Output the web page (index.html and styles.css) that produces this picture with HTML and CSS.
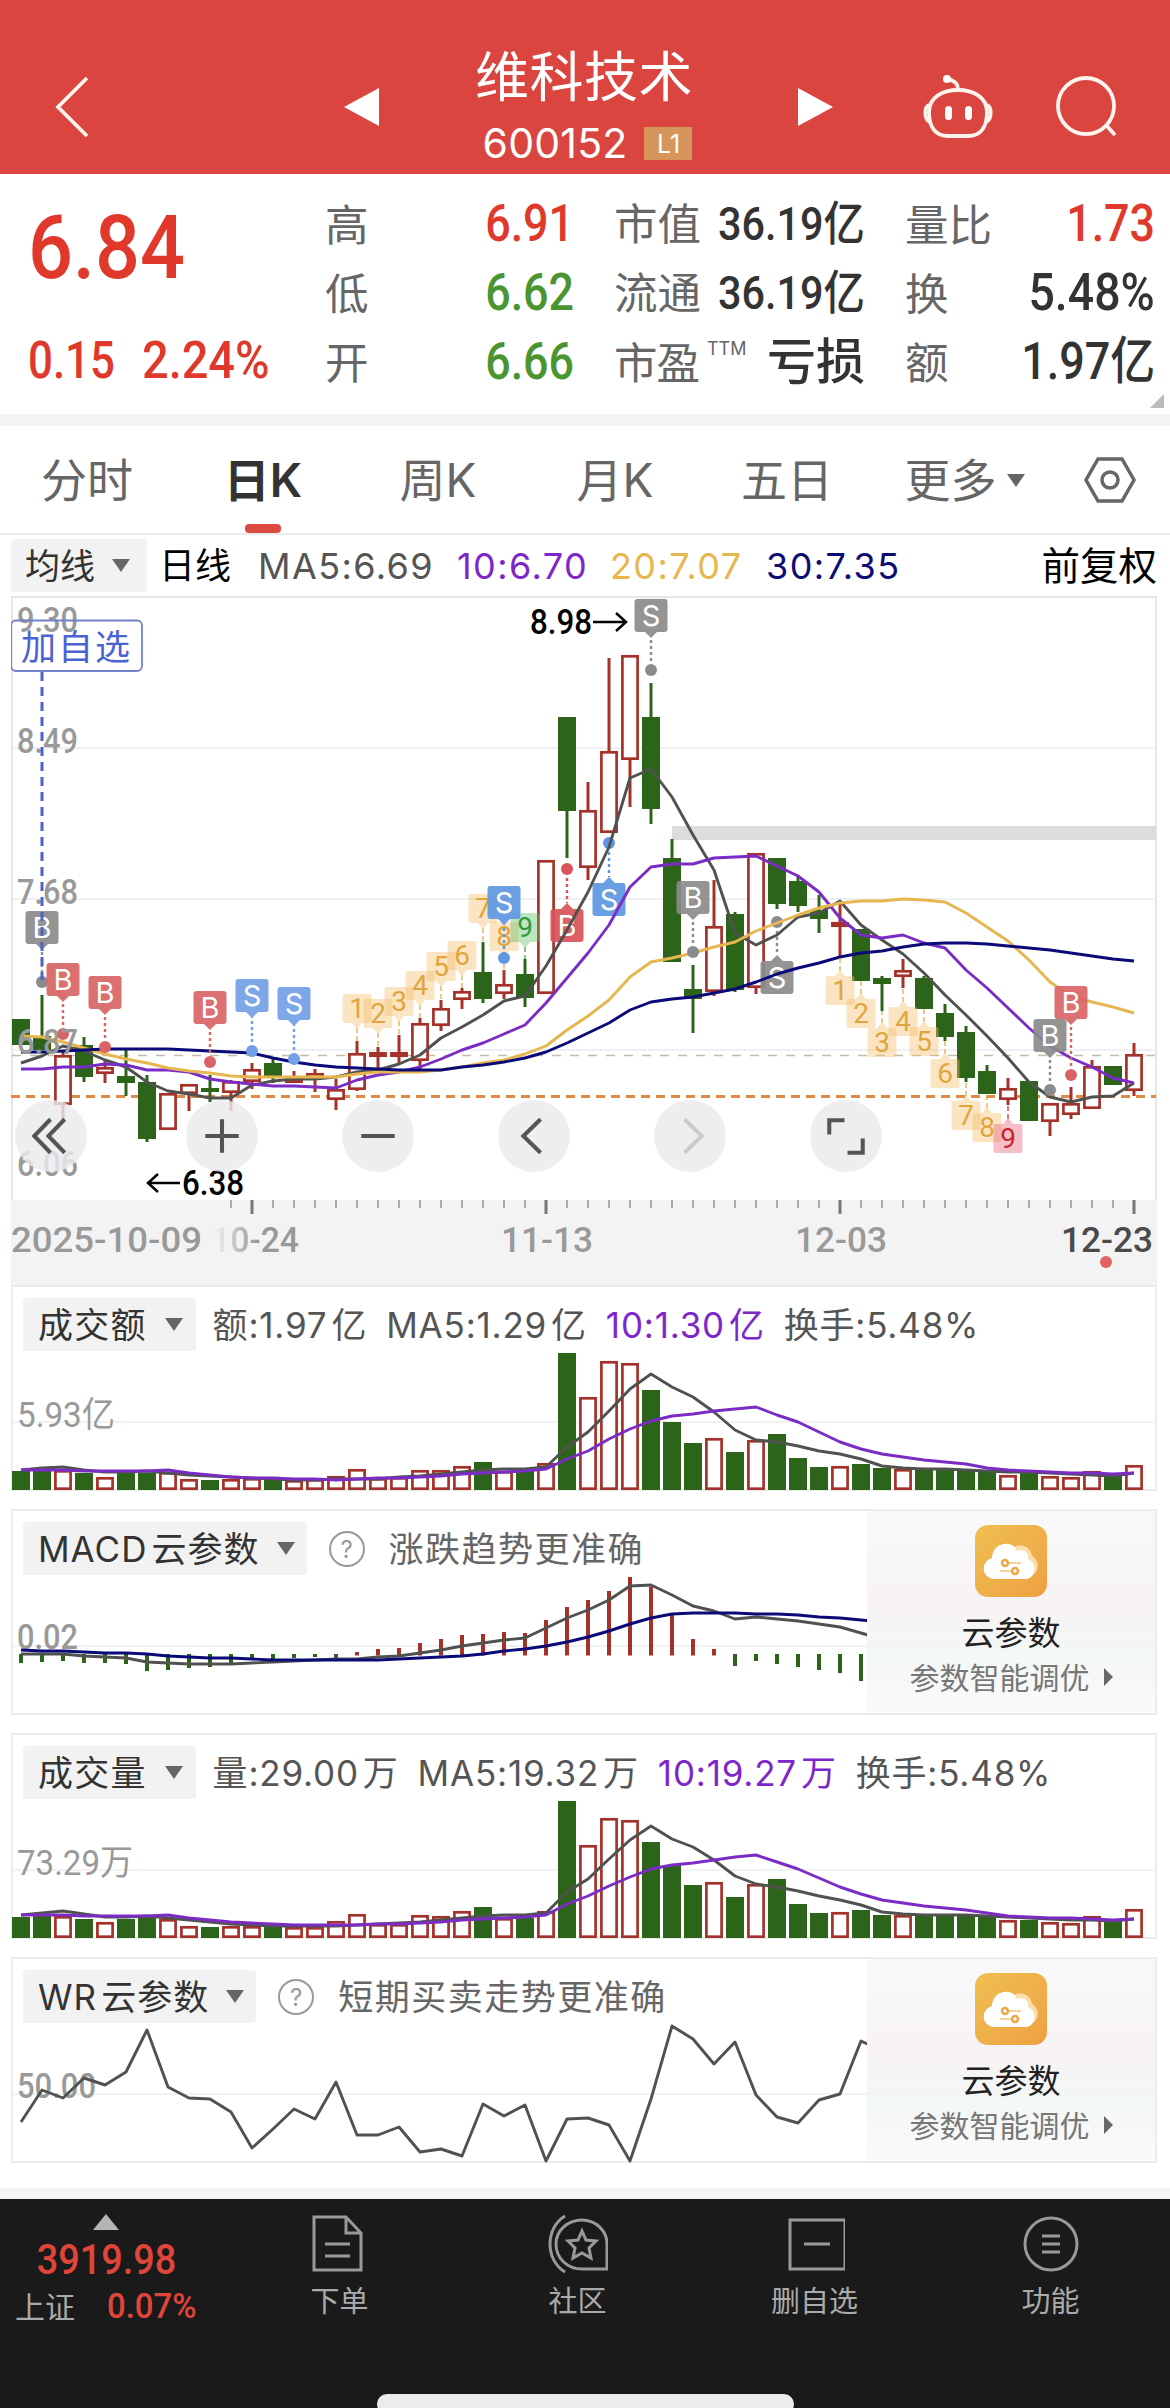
FILE: index.html
```html
<!DOCTYPE html>
<html lang="zh-CN">

<head>
    <meta charset="UTF-8">
    <meta name="viewport" content="width=device-width, initial-scale=1.0">
    <title>维科技术 600152</title>
    <link rel="stylesheet" href="styles.css">
</head>

<body>
    <header class="topbar">
        <svg class="back" width="40" height="64" viewBox="0 0 40 64"><path d="M34 3 L5 32 L34 61"/></svg>
        <svg class="prev" width="36" height="38" viewBox="0 0 36 38"><path d="M35 0 V38 L0 19 Z"/></svg>
        <div class="title">
            <h1>维科技术</h1>
            <p><span class="code">600152</span><span class="level">L1</span></p>
        </div>
        <svg class="next" width="36" height="38" viewBox="0 0 36 38"><path d="M0 0 V38 L35 19 Z"/></svg>
        <svg class="robot" width="72" height="66" viewBox="0 0 72 66">
            <path d="M36 16 C51 16 65 23 65 38 C65 54 58 62 46 62 H26 C14 62 7 54 7 38 C7 23 21 16 36 16 Z"/>
            <path d="M7 31 C2 33 2 46 8 48 M65 31 C70 33 70 46 64 48 M36 16 C36 8 32 8 27 5"/>
            <circle class="fill" cx="25" cy="5" r="4"/>
            <rect class="fill" x="23" y="32" width="7" height="14" rx="3.500"/>
            <rect class="fill" x="43" y="32" width="7" height="14" rx="3.500"/>
        </svg>
        <svg class="search" width="64" height="64" viewBox="0 0 64 64"><circle cx="31" cy="31" r="28"/><path d="M51 50 L60 60"/></svg>
    </header>

    <section class="quote">
        <div class="last">
            <div class="price num up">6.84</div>
            <div class="change"><span class="num up">0.15</span><span class="num up pct">2.24%</span></div>
        </div>
        <dl class="stats">
            <div class="cell"><dt>高</dt><dd class="num up">6.91</dd></div>
            <div class="cell"><dt>市值</dt><dd class="num cap">36.19亿</dd></div>
            <div class="cell"><dt>量比</dt><dd class="num up">1.73</dd></div>
            <div class="cell"><dt>低</dt><dd class="num down">6.62</dd></div>
            <div class="cell"><dt>流通</dt><dd class="num cap">36.19亿</dd></div>
            <div class="cell"><dt>换</dt><dd class="num pct">5.48%</dd></div>
            <div class="cell"><dt>开</dt><dd class="num down">6.66</dd></div>
            <div class="cell"><dt class="pe">市盈<sup>TTM</sup></dt><dd class="loss">亏损</dd></div>
            <div class="cell"><dt>额</dt><dd class="num">1.97亿</dd></div>
        </dl>
        <i class="corner"></i>
    </section>

    <nav class="tabs">
        <a>分时</a>
        <a class="active">日K</a>
        <a>周K</a>
        <a>月K</a>
        <a>五日</a>
        <a>更多<i class="caret"></i></a>
        <a><svg width="54" height="48" viewBox="0 0 54 48"><path d="M15 3 H39 L51 24 L39 45 H15 L3 24 Z"/><circle cx="27" cy="24" r="8"/></svg></a>
    </nav>

    <main>
        <div class="ma-row">
            <span class="chip">均线<i class="caret"></i></span>
            <span class="period">日线</span>
            <span class="ma5">MA5:6.69</span>
            <span class="ma10">10:6.70</span>
            <span class="ma20">20:7.07</span>
            <span class="ma30">30:7.35</span>
            <span class="adjust">前复权</span>
        </div>

        <div class="kchart">
            <svg id="kline" width="1146" height="689" viewBox="11 596 1146 689"></svg>
            <div class="tools">
                <button><svg viewBox="0 0 71 71"><path d="M35 19 L19 35.500 L35 52 M49 19 L33 35.500 L49 52"/></svg></button>
                <button><svg viewBox="0 0 71 71"><path d="M19 35.500 H52 M35.500 19 V52"/></svg></button>
                <button><svg viewBox="0 0 71 71"><path d="M19 35.500 H52"/></svg></button>
                <button><svg viewBox="0 0 71 71"><path d="M42 19 L25 35.500 L42 52"/></svg></button>
                <button class="off"><svg viewBox="0 0 71 71"><path d="M30 19 L47 35.500 L30 52"/></svg></button>
                <button><svg viewBox="0 0 71 71"><path d="M34 20 H19 V34 M37 52 H52 V38"/></svg></button>
            </div>
        </div>

        <section class="panel">
            <svg id="amount" width="1146" height="206" viewBox="11 0 1146 206"></svg>
            <div class="panel-head">
                <span class="chip">成交额<i class="caret"></i></span>
                <span>额:1.97&#8202;亿</span>
                <span>MA5:1.29&#8202;亿</span>
                <span class="ma10">10:1.30&#8202;亿</span>
                <span>换手:5.48%</span>
            </div>
        </section>

        <section class="panel">
            <svg id="macd" width="1146" height="206" viewBox="11 0 1146 206"></svg>
            <div class="panel-head hint">
                <span class="chip">MACD&#8202;云参数<i class="caret"></i></span>
                <i class="help">?</i>
                <span>涨跌趋势更准确</span>
            </div>
            <aside class="promo">
                <svg class="cloud" width="72" height="72" viewBox="0 0 72 72">
                    <rect width="72" height="72" rx="13" fill="url(#gold)"/>
                    <path fill="#fbdcae" d="M36 25 C42 17 55 19 57 31 C66 36 64 50 53 52 H36 Z"/>
                    <path fill="#fff" d="M20 54 C5 53 6 36 17 33 C17 17 38 14 42 26 C49 23 54 27 53 34 C63 38 61 54 50 54 Z"/>
                    <path stroke="#f6d29a" stroke-width="2" d="M31 38 H46 M25 46 H42"/>
                    <circle cx="30" cy="38" r="3" fill="#fff" stroke="#eda640" stroke-width="2.500"/>
                    <circle cx="40" cy="46" r="3" fill="#fff" stroke="#eda640" stroke-width="2.500"/>
                </svg>
                <b>云参数</b>
                <small>参数智能调优<i class="arrow"></i></small>
            </aside>
        </section>

        <section class="panel">
            <svg id="volume" width="1146" height="206" viewBox="11 0 1146 206"></svg>
            <div class="panel-head">
                <span class="chip">成交量<i class="caret"></i></span>
                <span>量:29.00&#8202;万</span>
                <span>MA5:19.32&#8202;万</span>
                <span class="ma10">10:19.27&#8202;万</span>
                <span>换手:5.48%</span>
            </div>
        </section>

        <section class="panel">
            <svg id="wr" width="1146" height="206" viewBox="11 0 1146 206"></svg>
            <div class="panel-head hint">
                <span class="chip">WR&#8202;云参数<i class="caret"></i></span>
                <i class="help">?</i>
                <span>短期买卖走势更准确</span>
            </div>
            <aside class="promo">
                <svg class="cloud" width="72" height="72" viewBox="0 0 72 72">
                    <defs>
                        <linearGradient id="gold" x1="0" y1="0" x2="1" y2="1">
                            <stop offset="0" stop-color="#efc052"/>
                            <stop offset="1" stop-color="#efa042"/>
                        </linearGradient>
                    </defs>
                    <rect width="72" height="72" rx="13" fill="url(#gold)"/>
                    <path fill="#fbdcae" d="M36 25 C42 17 55 19 57 31 C66 36 64 50 53 52 H36 Z"/>
                    <path fill="#fff" d="M20 54 C5 53 6 36 17 33 C17 17 38 14 42 26 C49 23 54 27 53 34 C63 38 61 54 50 54 Z"/>
                    <path stroke="#f6d29a" stroke-width="2" d="M31 38 H46 M25 46 H42"/>
                    <circle cx="30" cy="38" r="3" fill="#fff" stroke="#eda640" stroke-width="2.500"/>
                    <circle cx="40" cy="46" r="3" fill="#fff" stroke="#eda640" stroke-width="2.500"/>
                </svg>
                <b>云参数</b>
                <small>参数智能调优<i class="arrow"></i></small>
            </aside>
        </section>
    </main>

    <footer class="bottom">
        <div class="index">
            <i class="expand"></i>
            <div class="num point">3919.98</div>
            <div class="index-row"><span>上证</span><span class="num">0.07%</span></div>
        </div>
        <a><svg viewBox="0 0 60 60"><path d="M4 3 H36 L51 19 V56 H4 Z M36 3 V19 H51 M15 30 H40 M15 42 H40"/></svg>下单</a>
        <a><svg viewBox="0 0 60 60"><path d="M34 6 C19 6 8 17 8 30 C8 44 19 55 34 55 H59 V30 C59 17 48 6 34 6 Z M17 2 C-3 14 -3 46 17 58"/><path d="M34 17 L38 26 L48 27 L41 34 L43 44 L34 39 L25 44 L27 34 L20 27 L30 26 Z"/></svg>社区</a>
        <a><svg viewBox="0 0 60 60"><path d="M5 6 H60 V55 H5 Z M19 30 H45"/></svg>删自选</a>
        <a><svg viewBox="0 0 60 60"><circle cx="30" cy="30" r="26"/><path d="M21 22 H39 M21 30 H39 M21 38 H39"/></svg>功能</a>
        <i class="home"></i>
    </footer>

    <script src="charts.js"></script>
</body>

</html>
```
FILE: styles.css
```css
html, body {
    margin: 0;
    padding: 0;
}

body {
    width: 1170px;
    height: 2408px;
    overflow: hidden;
    background: #fff;
    color: #333;
    font-family: Inter, "Noto Sans CJK SC", sans-serif;
    display: flex;
    flex-direction: column;
}

h1, p, dl, dt, dd {
    margin: 0;
}

i {
    font-style: normal;
}

svg {
    display: block;
}

.num {
    font-family: Roboto, "Noto Sans CJK SC", sans-serif;
    font-weight: 500;
}

.up { color: #e0382b; }
.down { color: #4b9531; }
.ma5 { color: #555; }
.ma10 { color: #7d26c9; }
.ma20 { color: #e6b64f; }
.ma30 { color: #0c0c72; }

/* header */
.topbar {
    height: 174px;
    flex: none;
    box-sizing: border-box;
    padding-top: 40px;
    background: #db453f;
    color: #fff;
    display: grid;
    grid-template-columns: 53px 291px 108px 264px 82px 121px 133px 118px;
    align-items: center;
}

.topbar svg {
    fill: none;
    stroke: #fff3ee;
    stroke-width: 3.8;
}

.topbar .back { grid-column: 2; }

.topbar .prev, .topbar .next {
    fill: #fff;
    stroke: none;
}

.topbar .next { grid-column: 6; }
.topbar .robot { margin-left: 3px; }
.topbar .search { margin-left: 3px; }
.topbar .robot .fill { fill: #fff; stroke: none; }

.title {
    text-align: center;
    height: 134px;
}

.title h1 {
    font-size: 54px;
    line-height: 66px;
    font-weight: 400;
    margin-top: 5px;
    letter-spacing: .5px;
}

.title p {
    display: flex;
    justify-content: center;
    align-items: center;
    gap: 17px;
    height: 64px;
    margin-left: 7px;
}

.code {
    font-size: 41px;
    letter-spacing: .2px;
}

.level {
    width: 48px;
    height: 33px;
    line-height: 34px;
    background: #d6955a;
    font-size: 25px;
}

/* quote */
.quote {
    position: relative;
    height: 240px;
    flex: none;
    display: flex;
    border-bottom: 12px solid #f4f4f4;
}

.last {
    width: 325px;
    padding-left: 28px;
    box-sizing: border-box;
}

.price {
    font-size: 89px;
    line-height: 104px;
    margin-top: 22px;
    transform: scaleX(.89);
    transform-origin: left;
}

.change {
    display: flex;
    margin-top: 31px;
    font-size: 51px;
    line-height: 60px;
}

.change span {
    transform: scaleX(.86);
    transform-origin: left;
    width: 114px;
    white-space: nowrap;
}

.change .pct {
    transform: scaleX(.92);
}

.stats {
    display: grid;
    grid-template-columns: 249px 251px 250px;
    grid-template-rows: repeat(3, 69px);
    column-gap: 40px;
    padding-top: 15px;
}

.cell {
    display: flex;
    justify-content: space-between;
    align-items: baseline;
    white-space: nowrap;
    line-height: 69px;
}

.cell dt {
    font-size: 43.5px;
    color: #666;
}

.cell dd {
    font-size: 51px;
    transform: scaleX(.88);
    transform-origin: right;
    margin-left: -40px;
}

.cell .cap {
    font-size: 47px;
}

.cell .pct {
    transform: scaleX(.91);
}

.pe {
    display: flex;
    letter-spacing: -1px;
}

.pe sup {
    font-size: 18px;
    line-height: 20px;
    margin: 10px 0 0 8px;
    letter-spacing: 0;
}

.cell .loss {
    font-size: 49px;
    font-weight: 500;
    transform: none;
}

.corner {
    position: absolute;
    right: 6px;
    bottom: 6px;
    border: 7px solid transparent;
    border-right-color: #bbb;
    border-bottom-color: #bbb;
}

/* tabs */
.tabs {
    height: 109px;
    flex: none;
    box-sizing: border-box;
    border-bottom: 2px solid #ececec;
    display: grid;
    grid-template-columns: 174px 178px 172px 182px 162px 193px 98px;
}

.tabs a {
    position: relative;
    display: flex;
    align-items: center;
    justify-content: center;
    font-size: 46px;
    line-height: 60px;
    padding-top: 1px;
    color: #666;
}

.tabs svg {
    fill: none;
    stroke: #666;
    stroke-width: 3.5;
}

.tabs .active {
    color: #333;
    font-weight: 600;
}

.tabs .active::after {
    content: "";
    position: absolute;
    bottom: 0;
    width: 36px;
    height: 9px;
    border-radius: 4px;
    background: #db4b42;
}

.caret {
    display: inline-block;
    border: 9px solid transparent;
    border-top: 13px solid #666;
    border-bottom: 0;
}

.tabs .caret {
    margin-left: 10px;
}

/* main */
main {
    width: 1146px;
    margin-left: 11px;
    height: 1653px;
    flex: none;
}

.chip {
    height: 53px;
    box-sizing: border-box;
    display: flex;
    align-items: center;
    background: #f2f2f2;
    border-radius: 4px;
    color: #333;
    font-size: 35px;
}

.ma-row {
    height: 61px;
    display: flex;
    align-items: center;
    font-size: 36px;
    line-height: 48px;
    white-space: nowrap;
}

.ma-row .chip {
    width: 136px;
    padding-left: 14px;
    gap: 17px;
    margin-right: 12px;
}

.period {
    color: #000;
    width: 99px;
}

.ma-row .ma5, .ma-row .ma10, .ma-row .ma20, .ma-row .ma30 { letter-spacing: 1.4px; }
.ma-row .ma5 { width: 199px; }
.ma-row .ma10 { width: 153px; }
.ma-row .ma20 { width: 156px; }

.adjust {
    color: #000;
    margin-left: auto;
    font-size: 38.5px;
}

.kchart {
    position: relative;
    height: 689px;
}

.tools button {
    position: absolute;
    top: 504px;
    left: 4px;
    width: 72px;
    height: 72px;
    padding: 0;
    border: 0;
    border-radius: 50%;
    background: rgba(234, 234, 238, .82);
}

.tools button:nth-child(2) { left: 175px; }
.tools button:nth-child(3) { left: 331px; }
.tools button:nth-child(4) { left: 487px; }
.tools button:nth-child(5) { left: 643px; }
.tools button:nth-child(6) { left: 799px; }

.tools path {
    fill: none;
    stroke: #555;
    stroke-width: 4;
}

.tools .off path { stroke: #ccc; }

.panel {
    height: 206px;
    margin-bottom: 18px;
    display: grid;
    grid-template-columns: 856px 290px;
    box-shadow: inset 0 0 0 2px #ececec;
}

.panel > svg {
    grid-area: 1 / 1 / 2 / 3;
}

.panel-head {
    grid-area: 1 / 1 / 2 / 3;
    display: flex;
    align-items: center;
    height: 53px;
    padding: 13px 0 0 12px;
    gap: 19px;
    font-size: 35px;
    line-height: 48px;
    color: #555;
    white-space: nowrap;
    letter-spacing: .8px;
}

.panel-head .chip {
    padding: 0 13px 0 15px;
    gap: 18px;
    margin-right: -2px;
    letter-spacing: 1.2px;
}

.hint {
    color: #666;
    letter-spacing: 1.5px;
}

.hint .chip {
    gap: 17px;
    padding-right: 12px;
    margin-right: 3px;
    letter-spacing: 1px;
}

.help {
    width: 32px;
    height: 32px;
    border: 2.5px solid #999;
    border-radius: 50%;
    color: #999;
    font-size: 24px;
    line-height: 33px;
    text-align: center;
    letter-spacing: 0;
    margin-right: 5px;
}

.promo {
    grid-area: 1 / 2;
    z-index: 1;
    margin: 2px;
    margin-left: 0;
    background: linear-gradient(#f8f8f9 15%, #f8f3f4 45%, #f3f7f6 70%, #f9faf9 95%);
    display: flex;
    flex-direction: column;
    align-items: center;
    padding-top: 14px;
}

.promo b {
    margin-top: 12px;
    font-size: 33px;
    line-height: 48px;
    font-weight: 400;
    color: #222;
}

.promo small {
    font-size: 30px;
    line-height: 42px;
    color: #777;
}

.arrow {
    display: inline-block;
    border: 9px solid transparent;
    border-left: 9px solid #666;
    border-right: 0;
    margin: 0 0 3px 14px;
}

/* bottom bar */
.bottom {
    position: relative;
    flex: 1;
    background: #1a1a1a;
    border-top: 11px solid #f5f5f5;
    color: #aaa;
    display: grid;
    grid-template-columns: 221px 237px 239px 235px 237px;
}

.bottom a {
    display: flex;
    flex-direction: column;
    align-items: center;
    padding-top: 15px;
    font-size: 29px;
    line-height: 44px;
}

.bottom svg {
    width: 60px;
    height: 60px;
    margin-bottom: 6px;
    fill: none;
    stroke: #999;
    stroke-width: 3;
}

.index {
    display: flex;
    flex-direction: column;
    align-items: center;
    padding-top: 15px;
    margin-left: -9px;
}

.expand {
    border: 13px solid transparent;
    border-bottom: 16px solid #b5b5b5;
    border-top: 0;
}

.point {
    font-size: 42px;
    line-height: 50px;
    margin-top: 5px;
    color: #e0453a;
    transform: scaleX(.9);
}

.index-row {
    display: flex;
    align-self: flex-start;
    align-items: baseline;
    padding-left: 24px;
    gap: 32px;
    font-size: 30px;
    line-height: 44px;
}

.index-row .num {
    color: #e0453a;
    font-size: 35px;
    width: 87px;
    transform: scaleX(.94);
    transform-origin: left;
}

.home {
    position: absolute;
    left: 377px;
    bottom: -6px;
    width: 417px;
    height: 20px;
    border-radius: 10px;
    background: #ececec;
}

/* chart text */
svg text {
    font-family: Roboto, "Noto Sans CJK SC", sans-serif;
    font-size: 35px;
}

.axis { fill: #999; font-weight: 500; }
.axis.unit { font-weight: 400; }
.axis.now { fill: #4a4a4a; }
.peak { fill: #000; font-weight: 500; }

svg .mark {
    fill: #fff;
    font-family: Inter, sans-serif;
    font-size: 29px;
    text-anchor: middle;
}

svg .count {
    font-size: 28px;
    text-anchor: middle;
}
```
FILE: charts.js
```javascript
const RED = '#a5322a', GREEN = '#2c651a';
const GRAY = '#505250', PURPLE = '#7a2cc4', GOLD = '#e6b64f', NAVY = '#0a0a78';

const x = i => 21 + i * 21;

function line(x1, y1, x2, y2, color, width, extra = '') {
    return `<line x1="${x1}" y1="${y1}" x2="${x2}" y2="${y2}" stroke="${color}" stroke-width="${width}" ${extra}/>`;
}

function poly(values, color, toY = v => v) {
    const pts = values.map((v, i) => `${x(i)},${toY(v)}`).join(' ');
    return `<polyline points="${pts}" fill="none" stroke="${color}" stroke-width="2.9" stroke-linejoin="round"/>`;
}

function label(text, lx, y, width, cls = 'axis') {
    return `<text class="${cls}" x="${lx}" y="${y}" textLength="${width}" lengthAdjust="spacingAndGlyphs">${text}</text>`;
}

function body(cx, top, bottom, up) {
    const h = bottom - top;
    return up
        ? `<rect x="${cx - 7.6}" y="${top + 1.3}" width="15.2" height="${Math.max(h - 2.6, 1)}" fill="#fff" stroke="${RED}" stroke-width="2.7"/>`
        : `<rect x="${cx - 9}" y="${top}" width="18" height="${h}" fill="${GREEN}"/>`;
}

// up flag, body top, body bottom, high, low
const candles = [
    [0, 1019, 1045, 1019, 1045], [0, 1036, 1050, 995, 1050], [1, 1055, 1105, 1052, 1120], [0, 1045, 1077, 1037, 1082],
    [1, 1067, 1074, 1060, 1083], [0, 1076, 1083, 1049, 1096], [0, 1082, 1139, 1075, 1142], [1, 1093, 1130, 1093, 1130],
    [1, 1084, 1094, 1084, 1111], [0, 1088, 1092, 1075, 1102], [1, 1081, 1093, 1080, 1111], [1, 1069, 1082, 1063, 1089],
    [0, 1063, 1076, 1059, 1083], [1, 1078, 1083, 1071, 1083], [1, 1073, 1079, 1069, 1092], [1, 1089, 1100, 1079, 1110],
    [1, 1053, 1090, 1041, 1091], [1, 1052, 1057, 1047, 1068], [1, 1052, 1057, 1035, 1063], [1, 1023, 1061, 1018, 1069],
    [1, 1008, 1026, 1000, 1031], [1, 991, 1000, 988, 1009], [0, 972, 999, 942, 1003], [1, 984, 994, 970, 999],
    [0, 974, 998, 959, 1007], [1, 860, 994, 860, 994], [0, 717, 811, 717, 858], [1, 810, 868, 782, 880],
    [1, 751, 833, 658, 833], [1, 655, 760, 655, 807], [0, 717, 809, 683, 824], [0, 858, 962, 839, 962],
    [0, 989, 999, 965, 1033], [1, 926, 992, 880, 996], [0, 914, 990, 912, 992], [1, 853, 988, 853, 994],
    [0, 858, 904, 858, 909], [0, 881, 906, 875, 912], [0, 910, 919, 895, 933], [1, 922, 927, 903, 957],
    [0, 929, 981, 929, 981], [0, 978, 984, 976, 1011], [1, 970, 977, 959, 988], [0, 978, 1009, 976, 1009],
    [0, 1013, 1037, 1004, 1041], [0, 1032, 1078, 1026, 1082], [0, 1071, 1094, 1065, 1094], [1, 1088, 1100, 1078, 1105],
    [0, 1081, 1121, 1081, 1121], [1, 1103, 1122, 1103, 1136], [1, 1103, 1115, 1087, 1119], [1, 1066, 1109, 1060, 1109],
    [0, 1066, 1085, 1066, 1085], [1, 1054, 1091, 1043, 1096]
];

const ma5 = [1063, 1056, 1046, 1051, 1060, 1067, 1082, 1091, 1094, 1098, 1098, 1085, 1081, 1079, 1079, 1077, 1072, 1070,
    1064, 1055, 1038, 1027, 1015, 1001, 996, 966, 930, 892, 847, 778, 769, 797, 835, 870, 933, 945, 935, 917, 913, 901,
    925, 940, 954, 973, 995, 1015, 1036, 1058, 1082, 1097, 1102, 1097, 1096, 1083];
const ma10 = [1069, 1069, 1067, 1067, 1064, 1065, 1070, 1070, 1072, 1079, 1082, 1084, 1086, 1086, 1087, 1088, 1080, 1075,
    1072, 1067, 1059, 1050, 1043, 1034, 1025, 1003, 978, 953, 925, 887, 867, 864, 864, 858, 857, 856, 866, 876, 892, 918,
    935, 938, 935, 943, 948, 970, 988, 1008, 1028, 1046, 1058, 1067, 1078, 1083];
const ma20 = [1036, 1037, 1042, 1048, 1054, 1059, 1063, 1068, 1071, 1073, 1076, 1077, 1077, 1077, 1077, 1077, 1074, 1072,
    1072, 1072, 1070, 1067, 1063, 1060, 1054, 1046, 1030, 1016, 1000, 977, 962, 958, 953, 947, 942, 931, 923, 915, 908,
    903, 901, 901, 899, 900, 902, 913, 927, 941, 960, 982, 996, 1002, 1007, 1013];
const ma30 = [1052, 1052, 1051, 1050, 1049, 1049, 1049, 1049, 1050, 1051, 1052, 1053, 1058, 1062, 1065, 1067, 1068, 1069,
    1070, 1070, 1070, 1067, 1065, 1062, 1058, 1052, 1043, 1033, 1023, 1010, 1002, 999, 997, 993, 989, 982, 974, 968, 963,
    957, 953, 951, 947, 944, 943, 943, 944, 946, 948, 950, 953, 956, 959, 961];

// letter, candle index, box top, dot y, color
const marks = [
    ['B', 1, 911, 982, '#8b8b8b'], ['B', 2, 963, 1034, '#d96466'], ['B', 4, 976, 1047, '#d96466'],
    ['B', 9, 991, 1062, '#d96466'], ['S', 11, 979, 1051, '#72a0e6'], ['S', 13, 987, 1059, '#72a0e6'],
    ['S', 23, 886, 958, '#5f97e2'], ['S', 30, 599, 670, '#8b8b8b'], ['B', 26, 909, 869, '#d9535a'],
    ['S', 28, 883, 843, '#5f97e2'], ['B', 32, 881, 952, '#8b8b8b'], ['S', 36, 961, 922, '#8b8b8b'],
    ['B', 49, 1019, 1090, '#8b8b8b'], ['B', 50, 986, 1075, '#d96466']
];

// number, candle index, box top
const countsAbove = [[1, 16, 994], [2, 17, 999], [3, 18, 987], [4, 19, 971], [5, 20, 952], [6, 21, 941], [7, 22, 894], [8, 23, 922], [9, 24, 913]];
const countsBelow = [[1, 39, 976], [2, 40, 999], [3, 41, 1028], [4, 42, 1007], [5, 43, 1027], [6, 44, 1059], [7, 45, 1101], [8, 46, 1113], [9, 47, 1124]];

function drawCount([n, i, top], below) {
    let bg = '#f3bf6d', fg = '#e0a63e';
    if (n === 9) {
        bg = below ? '#e8677a' : '#63be68';
        fg = below ? '#c9232c' : '#2f9a3c';
    }
    const cx = x(i);
    const tip = below ? `M${cx - 5} ${top} l5 -6 l5 6 Z` : `M${cx - 5} ${top + 29} l5 6 l5 -6 Z`;
    const end = below ? candles[i][4] : candles[i][3];
    return line(cx, below ? top - 5 : top + 34, cx, end, fg, 1.2, 'stroke-dasharray="5 3"')
        + `<g fill="${bg}" fill-opacity=".42"><rect x="${cx - 14.5}" y="${top}" width="29" height="29" rx="2"/><path d="${tip}"/></g>`
        + `<text class="count" x="${cx}" y="${top + 24}" fill="${fg}">${n}</text>`;
}

function drawMark([letter, i, top, dot, color]) {
    const cx = x(i);
    const below = dot < top;
    const tip = below ? `M${cx - 6} ${top} l6 -6 l6 6 Z` : `M${cx - 6} ${top + 33} l6 6 l6 -6 Z`;
    return line(cx, below ? dot + 9 : dot - 9, cx, below ? top - 6 : top + 38, color, 2.4, 'stroke-dasharray="3 3"')
        + `<circle cx="${cx}" cy="${dot}" r="6" fill="${color}"/>`
        + `<g fill="${color}" opacity=".92"><rect x="${cx - 16.5}" y="${top}" width="33" height="33" rx="3"/><path d="${tip}"/></g>`
        + `<text class="mark" x="${cx}" y="${top + 27}">${letter}</text>`;
}

function drawKline() {
    let s = '<defs><linearGradient id="fade"><stop offset=".15" stop-color="#f3f3f3"/><stop offset="1" stop-color="#f3f3f3" stop-opacity="0"/></linearGradient></defs>';
    s += '<rect x="11" y="1200" width="1146" height="85" fill="#f3f3f3"/>';
    s += '<path d="M12 1200 V597 H1156 V1200" fill="none" stroke="#e6e6e6" stroke-width="2"/>';
    [748, 899, 1050].forEach(y => s += line(12, y, 1154, y, '#eaebec', 1.5));
    s += '<rect x="672" y="826" width="484" height="14" fill="#dcdcdf"/>';
    s += line(12, 1055.5, 1156, 1055.5, '#c5bda8', 1.4, 'stroke-dasharray="9 9"');
    s += line(11, 1096.5, 1156, 1096.5, '#e08a48', 3, 'stroke-dasharray="9 6"');

    candles.forEach(([up, top, bottom, high, low], i) => {
        s += line(x(i), high, x(i), low, up ? RED : GREEN, 3) + body(x(i), top, bottom, up);
    });
    // markers hanging under the candles stay behind the average lines
    marks.filter(m => m[3] < m[2]).forEach(m => s += drawMark(m));
    s += poly(ma5, GRAY) + poly(ma10, PURPLE) + poly(ma20, GOLD) + poly(ma30, NAVY);
    countsAbove.forEach(c => s += drawCount(c, false));
    countsBelow.forEach(c => s += drawCount(c, true));
    marks.filter(m => m[3] > m[2]).forEach(m => s += drawMark(m));

    s += label('9.30', 17, 632, 61) + label('8.49', 17, 753, 61) + label('7.68', 17, 904, 61)
        + label('6.87', 17, 1054, 61) + label('6.06', 17, 1176, 61);
    s += '<rect x="11" y="620.500" width="131" height="50.500" rx="5" fill="none" stroke="#7181c9" stroke-width="1.800"/>';
    s += '<text x="21" y="660" fill="#4a63d2" textLength="109">加自选</text>';
    s += line(42, 672, 42, 980, '#4f62c8', 3, 'stroke-dasharray="9 6"');

    s += label('8.98', 530, 634, 62, 'peak') + '<path d="M593 622 H626 M616 613 L626 622 L616 631" fill="none" stroke="#000" stroke-width="2.500"/>';
    s += label('6.38', 182, 1195, 62, 'peak') + '<path d="M180 1183 H148 M158 1174 L148 1183 L158 1192" fill="none" stroke="#000" stroke-width="2.500"/>';

    for (let i = 10; i <= 53; i++) {
        const big = [11, 25, 39, 53].includes(i);
        s += line(x(i), 1200, x(i), big ? 1214 : 1208, big ? '#777' : '#aaa', big ? 3 : 2);
    }
    s += label('10-24', 211, 1252, 88) + '<rect x="205" y="1222" width="52" height="36" fill="url(#fade)"/>';
    s += label('2025-10-09', 11, 1252, 191) + label('11-13', 501, 1252, 92) + label('12-03', 795, 1252, 92)
        + label('12-23', 1061, 1252, 92, 'axis now');
    s += '<circle cx="1106" cy="1262" r="6" fill="#df6363"/>';
    document.getElementById('kline').innerHTML = s;
}

function drawVolume(id, heights, avg5, avg10, text, width) {
    let s = line(13, 137, 1154, 137, '#eee', 1.5);
    s += label(text, 17, 142, width, 'axis unit');
    heights.forEach((h, i) => s += body(x(i), 205 - h, 205, candles[i][0]));
    s += poly(avg5, GRAY, v => 205 - v) + poly(avg10, PURPLE, v => 205 - v);
    document.getElementById(id).innerHTML = s;
}

function drawMacd() {
    const bars = [-8, -7, -6, -8, -8, -9, -16, -15, -13, -12, -8, -4, -4, -3, -2, -3, 3, 6, 7, 12, 16, 20, 21, 23, 22, 35, 48,
        55, 64, 78, 68, 40, 16, 6, -11, -6, -9, -12, -15, -18, -26];
    const dif = [145, 145, 145, 147, 148, 149, 153, 154, 155, 155, 155, 154, 153, 152, 151, 150, 150, 148, 147, 144, 141, 137,
        134, 131, 129, 119, 109, 101, 91, 77, 76, 86, 97, 102, 110, 108, 110, 112, 115, 118, 124, 130];
    const dea = [141, 142, 142, 143, 144, 144, 145, 147, 148, 149, 149, 150, 151, 151, 151, 151, 151, 151, 150, 149, 148, 147,
        145, 142, 140, 137, 133, 128, 122, 115, 109, 105, 104, 104, 104, 105, 105, 106, 108, 109, 111, 113];
    let s = line(13, 137, 867, 137, '#eee', 1.5) + label('0.02', 17, 140, 61);
    bars.forEach((v, i) => s += line(x(i), v > 0 ? 146.5 : 145, x(i), 146 - v, v > 0 ? RED : GREEN, 4));
    s += poly(dif, GRAY) + poly(dea, NAVY);
    document.getElementById('macd').innerHTML = s;
}

function drawWr() {
    const wr = [165, 133, 141, 121, 128, 115, 73, 130, 141, 142, 155, 191, 172, 152, 162, 125, 178, 178, 170, 195, 192, 199,
        147, 159, 148, 204, 162, 161, 168, 204, 142, 69, 82, 107, 85, 138, 160, 166, 143, 137, 84, 94];
    document.getElementById('wr').innerHTML = line(13, 137, 867, 137, '#eee', 1.5) + label('50.00', 17, 141, 79) + poly(wr, GRAY);
}

drawKline();
drawVolume('amount',
    [19, 22, 20, 17, 13, 17, 17, 18, 11, 10, 11, 12, 10, 10, 11, 14, 21, 12, 13, 20, 20, 24, 28, 19, 19, 27, 137, 93, 129, 127,
        100, 68, 47, 52, 38, 50, 56, 32, 23, 24, 26, 22, 21, 21, 20, 19, 19, 15, 17, 14, 13, 19, 14, 25],
    [20, 22, 23, 20, 18, 18, 19, 17, 15, 14, 13, 12, 11, 10, 10, 11, 11, 11, 13, 14, 16, 18, 20, 21, 21, 23, 43, 58, 79, 101,
        116, 103, 93, 78, 60, 50, 48, 44, 39, 36, 31, 24, 22, 21, 21, 20, 19, 18, 18, 17, 16, 15, 14, 17],
    [20, 20, 20, 19, 19, 19, 19, 20, 17, 15, 13, 12, 12, 11, 11, 10, 11, 12, 12, 13, 14, 16, 17, 18, 19, 21, 31, 39, 51, 61,
        69, 74, 76, 79, 81, 83, 75, 68, 58, 48, 41, 36, 33, 30, 28, 26, 22, 20, 19, 18, 17, 17, 16, 17],
    '5.93亿', 98);
drawMacd();
drawVolume('volume',
    [21, 24, 22, 19, 16, 19, 21, 19, 12, 11, 12, 12, 11, 11, 11, 17, 24, 14, 14, 23, 22, 27, 31, 20, 20, 27, 137, 93, 120, 118,
        96, 73, 53, 56, 41, 54, 59, 34, 25, 26, 28, 23, 23, 23, 23, 22, 21, 18, 18, 16, 15, 22, 17, 29],
    [23, 25, 27, 24, 21, 21, 22, 20, 18, 16, 14, 13, 12, 12, 12, 12, 13, 14, 15, 16, 18, 20, 22, 23, 23, 25, 46, 59, 79, 98,
        112, 99, 91, 78, 62, 54, 51, 47, 42, 38, 33, 26, 24, 23, 23, 23, 22, 21, 20, 19, 18, 18, 17, 19],
    [23, 23, 23, 22, 22, 22, 22, 23, 20, 18, 16, 15, 14, 13, 13, 13, 13, 14, 14, 15, 16, 18, 19, 20, 21, 23, 34, 42, 52, 61,
        69, 73, 75, 78, 81, 83, 76, 69, 60, 51, 44, 38, 35, 32, 30, 28, 25, 22, 21, 20, 20, 19, 18, 19],
    '73.29万', 116);
drawWr();
```
